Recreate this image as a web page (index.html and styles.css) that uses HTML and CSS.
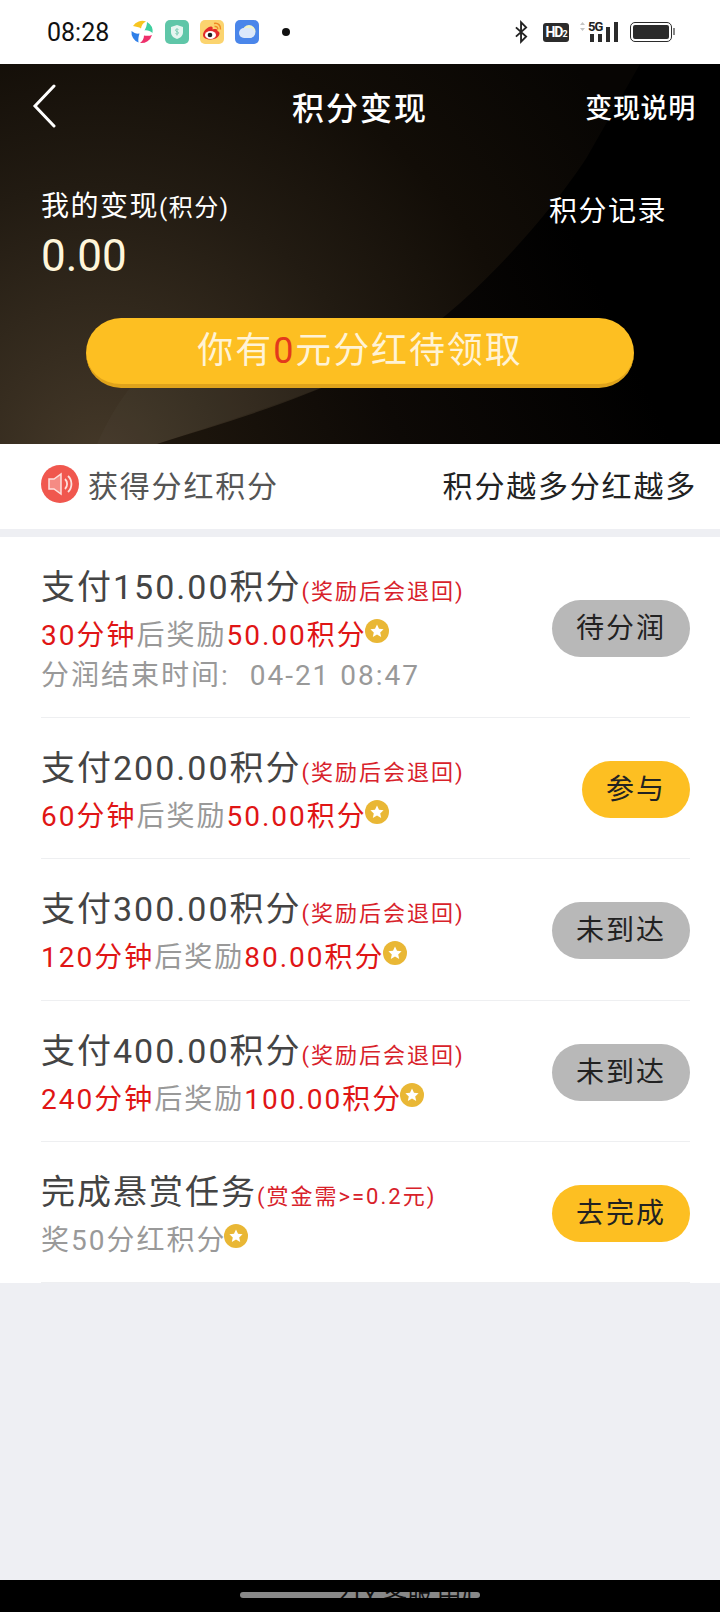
FILE: index.html
```html
<!DOCTYPE html>
<html lang="zh-CN">
  <head>
    <meta charset="utf-8">
    <title>积分变现</title>
    <link rel="stylesheet" href="styles.css">
  </head>
  <body>
    <div class="page">
      <div class="statusbar">
        <span class="clock">08:28</span>
        <div class="app-icons">
          <svg class="app-icon" viewBox="0 0 24 24">
            <path d="M3 6A11 11 0 0 1 16 1.500C13 3 11.500 5 11 8.500 9 7 6 6.500 3 6z" fill="#f7c520"/>
            <path d="M17 2A11 11 0 0 1 22.500 13C20 11 17.500 10 14.500 10.500 16 8 17 5 17 2z" fill="#3fcf9f"/>
            <path d="M22 15A11 11 0 0 1 10 23C12.500 21 14 18.500 14 15.500 16.500 16 19.500 16 22 15z" fill="#ee2f6b"/>
            <path d="M8.500 22.500A11 11 0 0 1 1.500 11C4 13 6.500 14 9.500 13.500 8.500 16.500 8 19.500 8.500 22.500z" fill="#2f7fe8"/>
          </svg>
          <svg class="app-icon" viewBox="0 0 24 24">
            <rect width="24" height="24" rx="5" fill="#5fc6a8"/>
            <path d="M12 5l6 2v5c0 4-3 6-6 7-3-1-6-3-6-7V7z" fill="#e6f5f0"/>
            <path d="M12 8.500v7M10.500 13.500c1 1 3 .6 3-.7s-3-1-3-2.500 2-1.500 3-.7" fill="none" stroke="#7fcdb6" stroke-width="1"/>
          </svg>
          <svg class="app-icon" viewBox="0 0 24 24">
            <rect width="24" height="24" rx="5" fill="#fbd46f"/>
            <path d="M14 3.500c4-1 7 2 6.500 6M14.500 6.500c2-.5 3.500 1 3.200 3" fill="none" stroke="#f08a24" stroke-width="1.500"/>
            <path d="M3 15c0-4 5-8.500 8-8.500 1.500 0 2 1.200 1.500 3 3-1 5-.5 5 1.500 1.500.5 2 1.500 2 2.500 0 3-4 6-9 6-4 0-7.500-1.500-7.500-4.500z" fill="#e32b2b"/>
            <ellipse cx="10.500" cy="15" rx="5.500" ry="4" fill="#fff"/>
            <circle cx="10" cy="15" r="2.300" fill="#222"/>
          </svg>
          <svg class="app-icon" viewBox="0 0 24 24">
            <rect width="24" height="24" rx="5" fill="#4a86ea"/>
            <circle cx="14" cy="11.500" r="6.500" fill="#f1f3c8"/>
            <rect x="4" y="8" width="16" height="10" rx="5" fill="#dbe8fb"/>
          </svg>
          <span class="status-dot"></span>
        </div>
        <div class="sys-icons">
          <svg class="bt" viewBox="0 0 14 24">
            <path d="M1 7l11 10-5.500 5.500v-21L12 7 1 17" fill="none" stroke="#222" stroke-width="2"/>
          </svg>
          <span class="hd">HD<small>2</small></span>
          <div class="signal">
            <svg class="arrows" viewBox="0 0 5 9">
              <path d="M2.500 0L5 3H0zM2.500 9L0 6h5z" fill="#c4c4c4"/>
            </svg>
            <span class="five-g">5G</span>
            <div class="bars">
              <i class="bar-1"></i><i class="bar-2"></i><i class="bar-3"></i><i class="bar-4"></i>
            </div>
          </div>
          <div class="battery"><span></span></div>
        </div>
      </div>

      <div class="hero">
        <svg class="hero-curve" viewBox="0 0 720 380">
          <defs>
            <radialGradient id="glow" gradientUnits="userSpaceOnUse" cx="100" cy="400" r="620">
              <stop offset="0" stop-color="#453929"/>
              <stop offset=".45" stop-color="#221b12"/>
              <stop offset=".7" stop-color="#120d07"/>
              <stop offset="1" stop-color="#070503"/>
            </radialGradient>
          </defs>
          <path d="M157 380C250 350 370 320 459 240 510 195 560 135 587 93L640 0 0 0 0 380z" fill="url(#glow)"/>
          <path d="M97 380C115 340 135 310 170 290L400 290C340 320 250 350 157 380z" fill="#fff" fill-opacity=".02"/>
        </svg>
        <div class="topbar">
          <svg class="back" viewBox="0 0 24 44">
            <path d="M22 2L3 22l19 20" fill="none" stroke="#fff" stroke-width="3" stroke-linecap="round"/>
          </svg>
          <h1>积分变现</h1>
          <span class="explain">变现说明</span>
        </div>
        <div class="balance">
          <div>
            <div class="balance-label">我的变现<small>(积分)</small></div>
            <div class="balance-value">0.00</div>
          </div>
          <span class="records">积分记录</span>
        </div>
        <div class="claim">你有<em>0</em>元分红待领取</div>
      </div>

      <div class="notice">
        <div class="notice-left">
          <svg class="speaker" viewBox="0 0 38 38">
            <circle cx="19" cy="19" r="19" fill="#f0574e"/>
            <path d="M8 14h5l7-5v20l-7-5H8z" fill="#f58b84" stroke="#fde0dd" stroke-width="1.500"/>
            <path d="M24 14a7 7 0 0 1 0 10M27 11a11 11 0 0 1 0 16" fill="none" stroke="#fde0dd" stroke-width="1.800"/>
          </svg>
          <span>获得分红积分</span>
        </div>
        <span class="notice-right">积分越多分红越多</span>
      </div>

      <div class="tasks">
        <div class="task">
          <div class="task-info">
            <div class="task-title">支付150.00积分<small>(奖励后会退回)</small></div>
            <div class="task-sub"><b>30分钟</b>后奖励<b>50.00积分</b><svg class="coin" viewBox="0 0 24 24"><circle cx="12" cy="12" r="12" fill="#e9b735"/><path d="M12 5.500l2 4.300 4.600.5-3.400 3.100 1 4.600-4.200-2.400-4.200 2.400 1-4.600-3.400-3.100 4.600-.5z" fill="#fff"/></svg></div>
            <div class="task-time">分润结束时间:&nbsp;&nbsp;04-21 08:47</div>
          </div>
          <span class="pill pill-grey">待分润</span>
        </div>
        <div class="task">
          <div class="task-info">
            <div class="task-title">支付200.00积分<small>(奖励后会退回)</small></div>
            <div class="task-sub"><b>60分钟</b>后奖励<b>50.00积分</b><svg class="coin" viewBox="0 0 24 24"><circle cx="12" cy="12" r="12" fill="#e9b735"/><path d="M12 5.500l2 4.300 4.600.5-3.400 3.100 1 4.600-4.200-2.400-4.200 2.400 1-4.600-3.400-3.100 4.600-.5z" fill="#fff"/></svg></div>
          </div>
          <span class="pill pill-yellow">参与</span>
        </div>
        <div class="task">
          <div class="task-info">
            <div class="task-title">支付300.00积分<small>(奖励后会退回)</small></div>
            <div class="task-sub"><b>120分钟</b>后奖励<b>80.00积分</b><svg class="coin" viewBox="0 0 24 24"><circle cx="12" cy="12" r="12" fill="#e9b735"/><path d="M12 5.500l2 4.300 4.600.5-3.400 3.100 1 4.600-4.200-2.400-4.200 2.400 1-4.600-3.400-3.100 4.600-.5z" fill="#fff"/></svg></div>
          </div>
          <span class="pill pill-grey">未到达</span>
        </div>
        <div class="task">
          <div class="task-info">
            <div class="task-title">支付400.00积分<small>(奖励后会退回)</small></div>
            <div class="task-sub"><b>240分钟</b>后奖励<b>100.00积分</b><svg class="coin" viewBox="0 0 24 24"><circle cx="12" cy="12" r="12" fill="#e9b735"/><path d="M12 5.500l2 4.300 4.600.5-3.400 3.100 1 4.600-4.200-2.400-4.200 2.400 1-4.600-3.400-3.100 4.600-.5z" fill="#fff"/></svg></div>
          </div>
          <span class="pill pill-grey">未到达</span>
        </div>
        <div class="task">
          <div class="task-info">
            <div class="task-title">完成悬赏任务<small>(赏金需&gt;=0.2元)</small></div>
            <div class="task-sub">奖50分红积分<svg class="coin" viewBox="0 0 24 24"><circle cx="12" cy="12" r="12" fill="#e9b735"/><path d="M12 5.500l2 4.300 4.600.5-3.400 3.100 1 4.600-4.200-2.400-4.200 2.400 1-4.600-3.400-3.100 4.600-.5z" fill="#fff"/></svg></div>
          </div>
          <span class="pill pill-yellow">去完成</span>
        </div>
      </div>

      <div class="spacer"></div>

      <div class="navbar">
        <div class="home-pill"><span>21Y 客服 中心 100</span></div>
      </div>
    </div>
  </body>
</html>
```

FILE: styles.css
```css
* {
  box-sizing: border-box;
}

body {
  margin: 0;
  font-family: "Roboto", "Noto Sans CJK SC", sans-serif;
}

.page {
  display: flex;
  flex-direction: column;
  width: 720px;
  height: 1612px;
  overflow: hidden;
  background: #eeeff3;
}

/* status bar */
.statusbar {
  display: flex;
  align-items: center;
  height: 64px;
  padding: 0 48px 0 47px;
  background: #fff;
}

.clock {
  width: 83px;
  font-size: 25px;
  color: #111;
}

.app-icons {
  display: flex;
  align-items: center;
  gap: 11px;
}

.app-icon {
  width: 24px;
  height: 24px;
}

.status-dot {
  width: 8px;
  height: 8px;
  margin-left: 12px;
  border-radius: 50%;
  background: #111;
}

.sys-icons {
  display: flex;
  align-items: center;
  margin-left: auto;
}

.bt {
  width: 13px;
  height: 24px;
  margin-right: 15px;
}

.hd {
  width: 26px;
  height: 19px;
  margin-right: 9px;
  border-radius: 3px;
  background: #2b2b2b;
  color: #fff;
  font-size: 14px;
  font-weight: 700;
  line-height: 19px;
  letter-spacing: -1px;
  text-align: center;
}

.hd small {
  font-size: 9px;
}

.signal {
  position: relative;
  width: 40px;
  height: 23px;
  margin: -3px 12px 0 0;
}

.arrows {
  position: absolute;
  left: 2px;
  top: 3px;
  width: 5px;
  height: 9px;
}

.five-g {
  position: absolute;
  left: 10px;
  top: 0;
  font-size: 13px;
  font-weight: 700;
  letter-spacing: -1px;
  color: #222;
}

.bars {
  display: flex;
  align-items: flex-end;
  justify-content: flex-end;
  gap: 4px;
  height: 100%;
}

.bars i {
  width: 4px;
  background: #2b2b2b;
}

.bar-1 {
  height: 8px;
}

.bar-2 {
  height: 8px;
}

.bar-3 {
  height: 15px;
}

.bar-4 {
  height: 20px;
}

.battery {
  position: relative;
  width: 42px;
  height: 20px;
  padding: 2px;
  border: 1.5px solid #2b2b2b;
  border-radius: 5px;
}

.battery span {
  display: block;
  height: 100%;
  border-radius: 2px;
  background: #2b2b2b;
}

.battery::after {
  content: "";
  position: absolute;
  right: -4px;
  top: 5px;
  width: 2px;
  height: 7px;
  background: #888;
}

/* dark header */
.hero {
  position: relative;
  height: 380px;
  overflow: hidden;
  background: linear-gradient(65deg, #2a2012, #0d0906 45%, #000 75%);
}

.hero-curve {
  position: absolute;
  left: 0;
  top: 0;
  width: 720px;
  height: 380px;
}

.topbar,
.balance,
.claim {
  position: relative;
}

.topbar {
  display: flex;
  align-items: center;
  justify-content: space-between;
  height: 84px;
  padding: 0 24px 0 32px;
  color: #fff;
}

.back {
  width: 24px;
  height: 44px;
}

.topbar h1 {
  position: absolute;
  left: 0;
  right: 0;
  margin: 0;
  font-size: 32px;
  font-weight: 500;
  letter-spacing: 2px;
  text-align: center;
}

.explain {
  font-size: 27px;
  font-weight: 500;
  letter-spacing: .7px;
}

.balance {
  display: flex;
  justify-content: space-between;
  height: 135px;
  padding: 38px 53px 0 41px;
  color: #fff;
}

.balance-label {
  font-size: 28px;
  line-height: 42px;
  letter-spacing: 1.500px;
}

.balance-label small {
  font-size: 24px;
  letter-spacing: 1.500px;
}

.balance-value {
  margin-top: -1px;
  font-size: 44px;
  line-height: 56px;
  color: #fff6da;
}

.records {
  padding-top: 5px;
  font-size: 28px;
  line-height: 42px;
  letter-spacing: 1.500px;
}

.claim {
  width: 548px;
  height: 70px;
  margin: 35px auto 0;
  border-bottom: 4px solid #dfa31b;
  border-radius: 35px;
  background: #fdbf22;
  color: #fff3d6;
  font-size: 36px;
  line-height: 66px;
  letter-spacing: 1.900px;
  text-align: center;
}

.claim em {
  font-style: normal;
  color: #e3391c;
}

/* notice strip */
.notice {
  display: flex;
  align-items: center;
  justify-content: space-between;
  height: 85px;
  padding: 0 23px 5px 41px;
  background: #fff;
  font-size: 30px;
  letter-spacing: 1.800px;
}

.notice-left {
  display: flex;
  align-items: center;
  gap: 9px;
  color: #555;
}

.speaker {
  width: 38px;
  height: 38px;
}

.notice-right {
  color: #222;
}

/* task list */
.tasks {
  margin-top: 8px;
  padding: 0 30px 0 41px;
  background: #fff;
}

.task {
  display: flex;
  align-items: center;
  justify-content: space-between;
  min-height: 141.25px;
  padding: 27px 0 21px;
  border-bottom: 1px solid #eeeff1;
}

.task-title {
  height: 46px;
  font-size: 34px;
  line-height: 46px;
  letter-spacing: 2px;
  color: #444;
}

.task-title small {
  font-size: 22px;
  letter-spacing: 2px;
  color: #d8212a;
}

.task-sub {
  display: flex;
  align-items: center;
  height: 46px;
  font-size: 28px;
  letter-spacing: 2px;
  color: #999;
}

.task-sub b {
  font-weight: 400;
  color: #e01515;
}

.task-time {
  height: 40px;
  font-size: 28px;
  line-height: 40px;
  letter-spacing: 2px;
  word-spacing: 1px;
  color: #999;
}

.coin {
  width: 24px;
  height: 24px;
  margin-left: -2px;
  margin-top: -4px;
}

.pill {
  height: 57px;
  margin-top: -3px;
  padding: 0 24px;
  border-radius: 29px;
  font-size: 28px;
  line-height: 57px;
  letter-spacing: 2px;
  color: #222;
}

.pill-grey {
  background: #b8b8b8;
}

.pill-yellow {
  background: #fdbf22;
}

.spacer {
  flex: 1;
}

/* gesture bar */
.navbar {
  display: flex;
  justify-content: center;
  height: 32px;
  padding-top: 12px;
  background: #000;
}

.home-pill {
  width: 240px;
  height: 6px;
  padding-left: 96px;
  overflow: hidden;
  border-radius: 3px;
  background: #888;
  color: #111;
  font-size: 24px;
  line-height: 6px;
  white-space: nowrap;
}
```
